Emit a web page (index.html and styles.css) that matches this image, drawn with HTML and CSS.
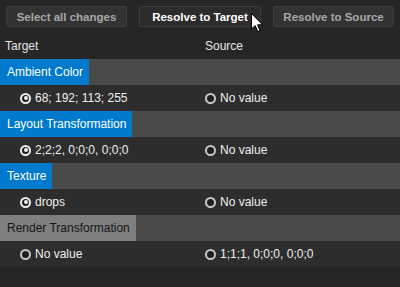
FILE: index.html
```html
<!DOCTYPE html>
<html lang="en">
<head>
    <meta charset="UTF-8">
    <title>Merge Conflicts</title>
    <link rel="stylesheet" href="styles.css">
</head>
<body>
    <div class="toolbar">
        <button class="btn" disabled>Select all changes</button>
        <button class="btn active">Resolve to Target</button>
        <button class="btn" disabled>Resolve to Source</button>
        <svg class="cursor" width="13" height="20" viewBox="0 0 13 20">
            <path d="M0.5 0.5 L0.5 16 L4.2 12.6 L6.8 18.6 L9 17.6 L6.5 11.8 L11.5 11.8 Z" fill="#fff" stroke="#000" stroke-width="1"/>
        </svg>
    </div>

    <div class="columns">
        <span>Target</span>
        <span>Source</span>
    </div>

    <div class="group">
        <div class="group-title"><span class="label">Ambient Color</span></div>
        <div class="values">
            <div class="cell target"><i class="radio checked"></i>68; 192; 113; 255</div>
            <div class="cell source"><i class="radio"></i>No value</div>
        </div>
    </div>

    <div class="group">
        <div class="group-title"><span class="label">Layout Transformation</span></div>
        <div class="values">
            <div class="cell target"><i class="radio checked"></i>2;2;2, 0;0;0, 0;0;0</div>
            <div class="cell source"><i class="radio"></i>No value</div>
        </div>
    </div>

    <div class="group">
        <div class="group-title"><span class="label">Texture</span></div>
        <div class="values">
            <div class="cell target"><i class="radio checked"></i>drops</div>
            <div class="cell source"><i class="radio"></i>No value</div>
        </div>
    </div>

    <div class="group">
        <div class="group-title"><span class="label muted">Render Transformation</span></div>
        <div class="values">
            <div class="cell target"><i class="radio"></i>No value</div>
            <div class="cell source"><i class="radio"></i>1;1;1, 0;0;0, 0;0;0</div>
        </div>
    </div>
</body>
</html>
```

FILE: styles.css
```css
/* Reset */
* {
    margin: 0;
    padding: 0;
    box-sizing: border-box;
}

body {
    font-family: 'Liberation Sans', Arial, sans-serif;
    font-size: 12px;
    background: #262626;
    color: #f0f0f0;
    width: 400px;
    height: 287px;
    overflow: hidden;
}

/* Toolbar */
.toolbar {
    position: relative;
    display: flex;
    gap: 12px;
    padding: 6px 6px 0;
}

.btn {
    width: 121px;
    height: 21px;
    background: #333333;
    border: 1px solid #3c3c3c;
    border-radius: 2px;
    color: #a8a8a8;
    font-family: inherit;
    font-size: 11.5px;
    font-weight: 700;
}

.btn.active {
    width: 122px;
    background: #2c2c2c;
    color: #ffffff;
}

.cursor {
    position: absolute;
    left: 251px;
    top: 13px;
}

/* Column headings */
.columns {
    display: grid;
    grid-template-columns: 200px 200px;
    height: 32px;
    align-items: center;
    padding-top: 6px;
    color: #e6e6e6;
    font-size: 12px;
}

.columns span {
    padding-left: 5px;
}

/* Groups */
.group-title {
    height: 26px;
    background: #4a4a4a;
}

.label {
    display: inline-block;
    height: 26px;
    line-height: 26px;
    padding: 0 6px 0 7px;
    background: #007acc;
    color: #ffffff;
    font-size: 12px;
}

.label.muted {
    background: #7f7f7f;
    color: #151515;
}

.values {
    display: grid;
    grid-template-columns: 200px 200px;
    height: 26px;
    background: #2d2d2d;
}

.cell {
    display: flex;
    align-items: center;
    gap: 4px;
    font-size: 12px;
}

.cell.target {
    padding-left: 20px;
}

.cell.source {
    padding-left: 5px;
}

/* Radio marks */
.radio {
    width: 11px;
    height: 11px;
    border-radius: 50%;
    border: 2px solid #c8c8c8;
    background: #1e1e1e;
    position: relative;
}

.radio.checked {
    border-color: #f0f0f0;
}

.radio.checked::after {
    content: "";
    position: absolute;
    left: 1.5px;
    top: 1.5px;
    width: 4px;
    height: 4px;
    border-radius: 50%;
    background: #f0f0f0;
}
```
